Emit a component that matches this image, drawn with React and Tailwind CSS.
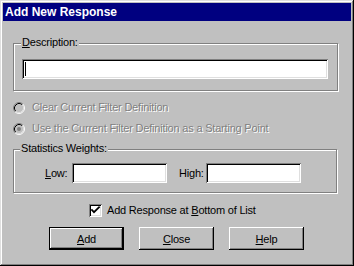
import React from "react";

const font = { fontFamily: '"Liberation Sans", Arial, sans-serif' };

function Radio({ checked }) {
  return (
    <svg width="12" height="12" viewBox="0 0 12 12" className="shrink-0">
      <circle cx="6" cy="6" r="5" fill="#c0c0c0" />
      <path d="M2.11 9.89 A5.5 5.5 0 0 1 9.89 2.11" stroke="#808080" strokeWidth="1" fill="none" />
      <path d="M9.89 2.11 A5.5 5.5 0 0 1 2.11 9.89" stroke="#ffffff" strokeWidth="1" fill="none" />
      <path d="M2.82 9.18 A4.5 4.5 0 0 1 9.18 2.82" stroke="#000000" strokeWidth="1" fill="none" />
      <path d="M9.18 2.82 A4.5 4.5 0 0 1 2.82 9.18" stroke="#dfdfdf" strokeWidth="1" fill="none" />
      {checked && <circle cx="6" cy="6" r="2" fill="#808080" />}
    </svg>
  );
}

const sunken =
  "bg-white shadow-[inset_1px_1px_0_#808080,inset_-1px_-1px_0_#fff,inset_2px_2px_0_#000,inset_-2px_-2px_0_#dfdfdf]";
const raised =
  "shadow-[inset_-1px_-1px_0_#000,inset_1px_1px_0_#fff,inset_-2px_-2px_0_#808080]";

function Button({ children, def }) {
  return (
    <div
      className={
        "w-[75px] h-[23px] flex items-center justify-center bg-[#c0c0c0] " +
        (def
          ? "border border-black shadow-[inset_-1px_-1px_0_#000,inset_1px_1px_0_#fff,inset_-2px_-2px_0_#808080]"
          : raised)
      }
    >
      <span className="text-[11px] text-black tracking-[-0.2px] pt-[1px]">{children}</span>
    </div>
  );
}

export default function App() {
  return (
    <div
      style={font}
      className="w-[354px] h-[266px] bg-[#c0c0c0] p-[3px] shadow-[inset_-1px_-1px_0_#000,inset_1px_1px_0_#dfdfdf,inset_-2px_-2px_0_#808080,inset_2px_2px_0_#fff] flex flex-col text-black"
    >
      {/* Title bar */}
      <div className="h-[18px] w-[348px] bg-[#000080] flex items-center pl-[2px]">
        <span className="text-white font-bold text-[12px] leading-none">Add New Response</span>
      </div>

      {/* Description group */}
      <div className="relative ml-[10px] mt-[22px] w-[325px] h-[48px] border border-[#808080] shadow-[1px_1px_0_#fff,inset_1px_1px_0_#fff] pl-[8px] pt-[15px]">
        <div className="absolute left-[7px] top-[-8px] px-[1px] bg-[#c0c0c0] text-[11px] leading-[13px] tracking-[-0.2px]">
          <span className="underline">D</span>escription:
        </div>
        <div className={"w-[306px] h-[20px] relative " + sunken}>
          <div className="absolute left-[3px] top-[3px] w-[1px] h-[14px] bg-black" />
        </div>
      </div>

      {/* Radios */}
      <div className="mt-[6px] h-[21px] flex items-center pl-[10px] gap-[7px]">
        <Radio />
        <span className="text-[11px] tracking-[-0.2px] text-[#808080] [text-shadow:1px_1px_0_#fff]">
          Clear Current Filter Definition
        </span>
      </div>
      <div className="h-[21px] flex items-center pl-[10px] gap-[7px]">
        <Radio checked />
        <span className="text-[11px] tracking-[-0.2px] text-[#808080] [text-shadow:1px_1px_0_#fff]">
          Use the Current Filter Definition as a Starting Point
        </span>
      </div>

      {/* Statistics Weights group */}
      <div className="relative ml-[10px] mt-[10px] w-[324px] h-[44px] border border-[#808080] shadow-[1px_1px_0_#fff,inset_1px_1px_0_#fff] pt-[13px] flex items-start">
        <div className="absolute left-[6px] top-[-8px] px-[1px] bg-[#c0c0c0] text-[11px] leading-[13px] tracking-[-0.2px]">
          Statistics Weights:
        </div>
        <div className="flex items-center h-[20px] ml-[31px]">
          <span className="w-[27px] text-[11px] tracking-[-0.2px]">
            <span className="underline">L</span>ow:
          </span>
          <div className={"w-[95px] h-[20px] " + sunken} />
          <span className="ml-[12px] w-[27px] text-[11px] tracking-[-0.2px]">
            Hi<span className="underline">g</span>h:
          </span>
          <div className={"w-[95px] h-[20px] " + sunken} />
        </div>
      </div>

      {/* Checkbox */}
      <div className="mt-[11px] h-[13px] flex items-center pl-[86px] gap-[5px]">
        <div className={"w-[13px] h-[13px] relative shrink-0 " + sunken}>
          <svg width="13" height="13" viewBox="0 0 13 13" className="absolute inset-0">
            <path d="M3 6 L5 8.2 L10 3.2" stroke="#000" strokeWidth="1.8" fill="none" strokeLinecap="square" />
          </svg>
        </div>
        <span className="text-[11px] tracking-[-0.2px]">
          Add Response at <span className="underline">B</span>ottom of List
        </span>
      </div>

      {/* Buttons */}
      <div className="mt-[10px] flex pl-[46px] gap-[15px]">
        <Button def>
          <span className="underline">A</span>dd
        </Button>
        <Button>
          <span className="underline">C</span>lose
        </Button>
        <Button>
          <span className="underline">H</span>elp
        </Button>
      </div>
    </div>
  );
}
